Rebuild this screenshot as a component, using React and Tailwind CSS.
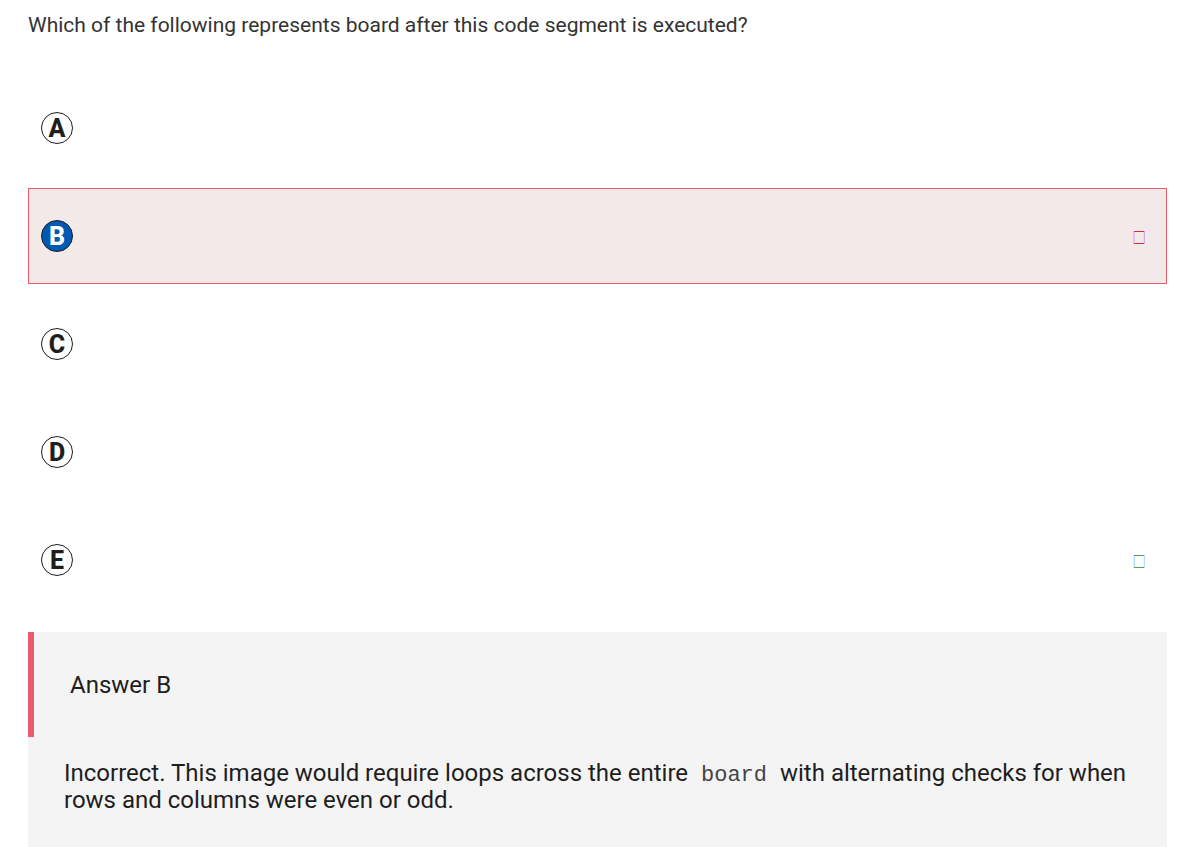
const choices = [
  { letter: "A" },
  { letter: "B", selected: true, mark: "incorrect" },
  { letter: "C" },
  { letter: "D" },
  { letter: "E", mark: "correct" },
];

const marks = {
  incorrect: { line: "#cc2f45", outerLeft: "#f0c3a8", innerLeft: "#dfc4e8", innerRight: "#f1dfbd", outerRight: "#d5a8ee" },
  correct: { line: "#56a04c", outerLeft: "#fde8d0", innerLeft: "#b4dcfb", innerRight: "#fcf5c8", outerRight: "#b4dcfb" },
};

function Mark({ kind }) {
  const c = marks[kind];
  return (
    <svg className="mt-0.5 h-[13px] w-3" viewBox="0 0 12 13" role="img" aria-label={kind} shapeRendering="crispEdges">
      <rect x="0" y="0" width="1" height="13" fill={c.outerLeft} />
      <rect x="1" y="0" width="1" height="13" fill={c.innerLeft} />
      <rect x="10" y="0" width="1" height="13" fill={c.innerRight} />
      <rect x="11" y="0" width="1" height="13" fill={c.outerRight} />
      <rect x="1" y="0" width="10" height="1" fill={c.line} />
      <rect x="1" y="12" width="10" height="1" fill={c.line} />
    </svg>
  );
}

function Choice({ letter, selected, mark }) {
  return (
    <li
      className={`flex h-24 items-center justify-between border pr-[21px] pl-3 ${
        selected ? "border-[#e95c6c] bg-[#f3e9e8]" : "border-transparent"
      }`}
    >
      <button
        type="button"
        aria-pressed={Boolean(selected)}
        className={`flex size-8 items-center justify-center rounded-full border border-[#1e1e1e] text-[25px] leading-none font-extrabold ${
          selected ? "bg-[#0059b3] text-white" : "bg-white text-[#1e1e1e]"
        }`}
      >
        {letter}
      </button>
      {mark && <Mark kind={mark} />}
    </li>
  );
}

export default function App() {
  return (
    <main className="bg-white pr-6 pl-7 font-['Roboto',sans-serif] text-[#1e1e1e]">
      <p className="pt-3 text-[21px] leading-[26px] text-[#333333]">
        Which of the following represents board after this code segment is executed?
      </p>
      <ul className="mt-[42px] flex flex-col gap-3">
        {choices.map((choice) => (
          <Choice key={choice.letter} {...choice} />
        ))}
      </ul>
      <section className="mt-6 bg-[#f4f4f4] pb-[33px]">
        <h2 className="flex h-[105px] items-center border-l-6 border-[#e95c6c] pl-9 text-2xl">Answer B</h2>
        <p className="px-9 pt-[23px] text-2xl leading-[27px]">
          Incorrect. This image would require loops across the entire{" "}
          <code className="px-[7px] font-['Liberation_Mono',monospace] text-[22px] leading-none text-[#444444]">board</code>{" "}
          with alternating checks for when rows and columns were even or odd.
        </p>
      </section>
    </main>
  );
}
